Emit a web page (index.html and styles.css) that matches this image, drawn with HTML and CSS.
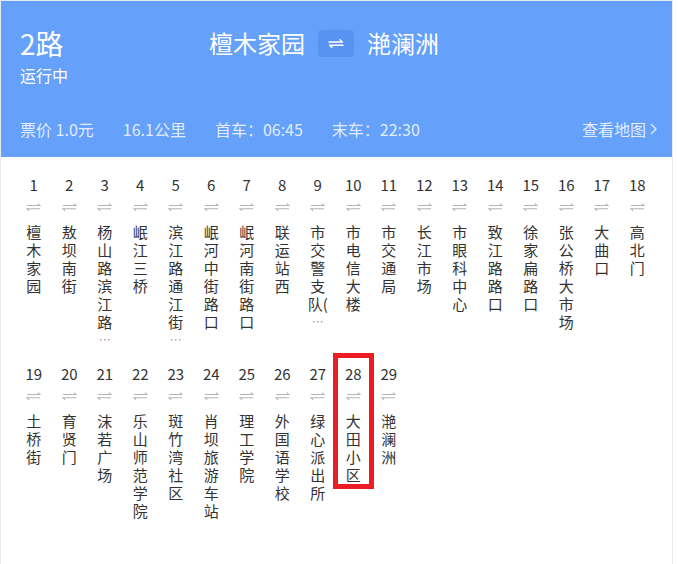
FILE: index.html
```html
<!DOCTYPE html>
<html lang="zh-CN">
<head>
<meta charset="utf-8">
<title>2路</title>
<link rel="stylesheet" href="styles.css">
</head>
<body>
<div class="card">
  <header class="header">
    <div class="top">
      <div class="line-info">
        <div class="line-name">2路</div>
        <div class="status">运行中</div>
      </div>
      <div class="route">
        <span class="terminal">檀木家园</span>
        <span class="swap">
          <svg width="16" height="9" viewBox="0 0 16 9"><path d="M1 3H14.5L12 0.8M15 6.2H1.5L4 8.4" fill="none" stroke="#fff" stroke-width="1.4" stroke-linecap="round" stroke-linejoin="round"/></svg>
        </span>
        <span class="terminal">滟澜洲</span>
      </div>
    </div>
    <div class="meta">
      <span>票价 1.0元</span>
      <span>16.1公里</span>
      <span>首车：06:45</span>
      <span>末车：22:30</span>
      <a class="map-link">查看地图<svg width="7" height="12" viewBox="0 0 7 12"><path d="M1 1L6 6L1 11" fill="none" stroke="currentColor" stroke-width="1.3"/></svg></a>
    </div>
  </header>
  <div class="stops">
    <div class="stop"><div class="num">1</div><div class="dir"></div><div class="name">檀木家园</div></div>
    <div class="stop"><div class="num">2</div><div class="dir"></div><div class="name">敖坝南街</div></div>
    <div class="stop"><div class="num">3</div><div class="dir"></div><div class="name">杨山路滨江路</div><div class="more">…</div></div>
    <div class="stop"><div class="num">4</div><div class="dir"></div><div class="name">岷江三桥</div></div>
    <div class="stop"><div class="num">5</div><div class="dir"></div><div class="name">滨江路通江街</div><div class="more">…</div></div>
    <div class="stop"><div class="num">6</div><div class="dir"></div><div class="name">岷河中街路口</div></div>
    <div class="stop"><div class="num">7</div><div class="dir"></div><div class="name">岷河南街路口</div></div>
    <div class="stop"><div class="num">8</div><div class="dir"></div><div class="name">联运站西</div></div>
    <div class="stop"><div class="num">9</div><div class="dir"></div><div class="name">市交警支队(</div><div class="more">…</div></div>
    <div class="stop"><div class="num">10</div><div class="dir"></div><div class="name">市电信大楼</div></div>
    <div class="stop"><div class="num">11</div><div class="dir"></div><div class="name">市交通局</div></div>
    <div class="stop"><div class="num">12</div><div class="dir"></div><div class="name">长江市场</div></div>
    <div class="stop"><div class="num">13</div><div class="dir"></div><div class="name">市眼科中心</div></div>
    <div class="stop"><div class="num">14</div><div class="dir"></div><div class="name">致江路路口</div></div>
    <div class="stop"><div class="num">15</div><div class="dir"></div><div class="name">徐家扁路口</div></div>
    <div class="stop"><div class="num">16</div><div class="dir"></div><div class="name">张公桥大市场</div></div>
    <div class="stop"><div class="num">17</div><div class="dir"></div><div class="name">大曲口</div></div>
    <div class="stop"><div class="num">18</div><div class="dir"></div><div class="name">高北门</div></div>
    <div class="stop"><div class="num">19</div><div class="dir"></div><div class="name">土桥街</div></div>
    <div class="stop"><div class="num">20</div><div class="dir"></div><div class="name">育贤门</div></div>
    <div class="stop"><div class="num">21</div><div class="dir"></div><div class="name">沫若广场</div></div>
    <div class="stop"><div class="num">22</div><div class="dir"></div><div class="name">乐山师范学院</div></div>
    <div class="stop"><div class="num">23</div><div class="dir"></div><div class="name">斑竹湾社区</div></div>
    <div class="stop"><div class="num">24</div><div class="dir"></div><div class="name">肖坝旅游车站</div></div>
    <div class="stop"><div class="num">25</div><div class="dir"></div><div class="name">理工学院</div></div>
    <div class="stop"><div class="num">26</div><div class="dir"></div><div class="name">外国语学校</div></div>
    <div class="stop"><div class="num">27</div><div class="dir"></div><div class="name">绿心派出所</div></div>
    <div class="stop highlight"><div class="num">28</div><div class="dir"></div><div class="name">大田小区</div></div>
    <div class="stop"><div class="num">29</div><div class="dir"></div><div class="name">滟澜洲</div></div>
  </div>
</div>
</body>
</html>
```
FILE: styles.css
```css
html, body {
  margin: 0;
  padding: 0;
  background: #fff;
}
body {
  font-family: "Noto Sans CJK SC", "Liberation Sans", sans-serif;
  color: #333;
}
.card {
  width: 671px;
  height: 580px;
  border: 1px solid #e6ebf2;
  background: #fff;
}
.header {
  box-sizing: border-box;
  height: 156px;
  background: #65a1fb;
  color: #fff;
  padding: 24px 15px 0 19px;
}
.top {
  display: flex;
}
.line-info {
  width: 189px;
}
.line-name {
  font-size: 28px;
  line-height: 36px;
  font-weight: 400;
}
.status {
  font-size: 16px;
  line-height: 22px;
  margin-top: 3px;
}
.route {
  display: flex;
  align-items: center;
  height: 36px;
}
.terminal {
  font-size: 24px;
  line-height: 32px;
}
.swap {
  display: flex;
  align-items: center;
  justify-content: center;
  width: 36px;
  height: 27px;
  margin: 0 13px;
  border-radius: 4px;
  background: #5893f1;
}
.meta {
  display: flex;
  align-items: center;
  gap: 29px;
  margin-top: 32px;
  font-size: 16px;
  line-height: 22px;
  color: rgba(255, 255, 255, 0.82);
}
.map-link {
  margin-left: auto;
  display: flex;
  align-items: center;
  gap: 4px;
}
.stops {
  display: grid;
  grid-template-columns: repeat(18, 35.5px);
  row-gap: 9px;
  padding: 12px 0 0 15px;
  align-items: start;
  justify-items: center;
}
.stop {
  width: 31px;
  padding-top: 6px;
  display: flex;
  flex-direction: column;
  align-items: center;
}
.num {
  font-size: 15px;
  line-height: 20px;
  color: #333;
}
.dir {
  margin-top: 2px;
  width: 16px;
  height: 20px;
  background: no-repeat center / 15px 8px url("data:image/svg+xml,%3Csvg xmlns='http://www.w3.org/2000/svg' width='15' height='8' viewBox='0 0 15 8'%3E%3Cpath d='M1 2.5H14L11.8 0.6M14 5.8H1L3.2 7.7' fill='none' stroke='%23b4b4b4' stroke-width='1.1'/%3E%3C/svg%3E");
}
.name {
  margin-top: 6px;
  width: 21px;
  font-size: 15px;
  line-height: 18px;
  word-break: break-all;
  text-align: center;
  color: #333;
}
.more {
  font-size: 12px;
  line-height: 18px;
  color: #999;
}
.highlight {
  outline: 5px solid #ec1c24;
}
```
